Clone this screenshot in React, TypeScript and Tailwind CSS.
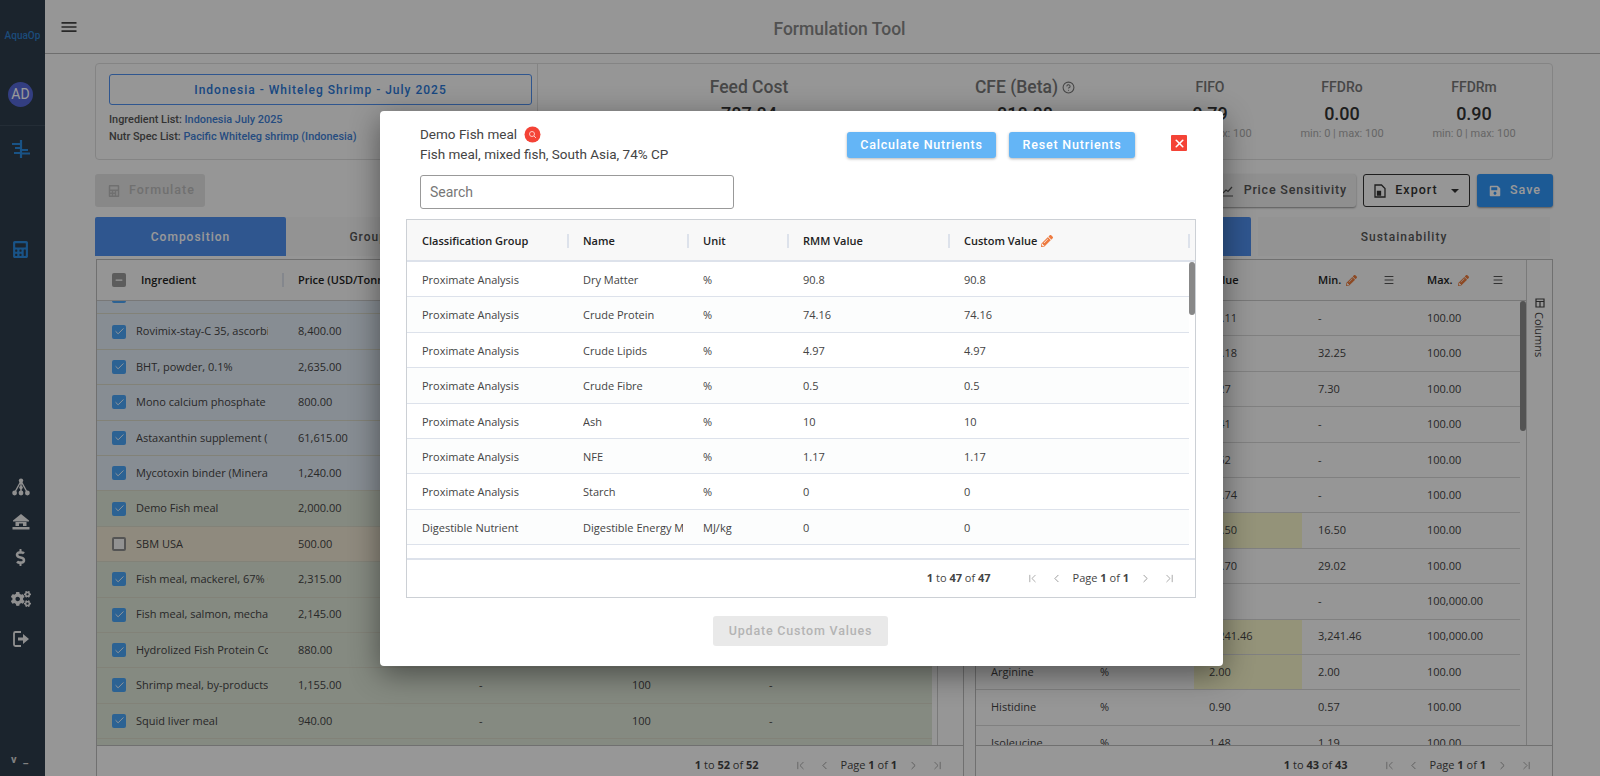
import React from 'react';
import { Check, ChevronFirst, ChevronLast, ChevronLeft, ChevronRight, CircleHelp, Menu as MenuLines, Minus, X } from 'lucide-react';
import { FaCalculator, FaCogs, FaDollarSign, FaPencilAlt, FaSave } from 'react-icons/fa';
import { MdMenu } from 'react-icons/md';

const ingredientRows = [
    { name: '', price: '', tone: 'blue', checked: true },
    { name: 'Rovimix-stay-C 35, ascorbic acid', price: '8,400.00', tone: 'blue', checked: true },
    { name: 'BHT, powder, 0.1%', price: '2,635.00', tone: 'blue', checked: true },
    { name: 'Mono calcium phosphate', price: '800.00', tone: 'blue', checked: true },
    { name: 'Astaxanthin supplement (10%)', price: '61,615.00', tone: 'blue', checked: true },
    { name: 'Mycotoxin binder (Mineral)', price: '1,240.00', tone: 'blue', checked: true },
    { name: 'Demo Fish meal', price: '2,000.00', tone: 'green', checked: true },
    { name: 'SBM USA', price: '500.00', tone: 'orange', checked: false },
    { name: 'Fish meal, mackerel, 67% CP', price: '2,315.00', tone: 'green', checked: true },
    { name: 'Fish meal, salmon, mechanical', price: '2,145.00', tone: 'green', checked: true },
    { name: 'Hydrolized Fish Protein Conc.', price: '880.00', tone: 'green', checked: true },
    { name: 'Shrimp meal, by-products', price: '1,155.00', tone: 'green', checked: true },
    { name: 'Squid liver meal', price: '940.00', tone: 'green', checked: true },
    { name: '', price: '', tone: 'green', checked: true },
];

const nutrientRows = [
    { name: 'Dry Matter', value: '10.11', min: '-', max: '100.00' },
    { name: 'Crude Protein', value: '32.18', min: '32.25', max: '100.00' },
    { name: 'Crude Lipids', value: '7.27', min: '7.30', max: '100.00' },
    { name: 'Crude Fibre', value: '2.41', min: '-', max: '100.00' },
    { name: 'Ash', value: '1.62', min: '-', max: '100.00' },
    { name: 'NFE', value: '12.74', min: '-', max: '100.00' },
    { name: 'Starch', value: '16.50', min: '16.50', max: '100.00', low: true },
    { name: 'Dig. Protein', value: '29.70', min: '29.02', max: '100.00' },
    { name: 'Dig. Lipid', value: '', min: '-', max: '100,000.00' },
    { name: 'Dig. Energy', value: '3,241.46', min: '3,241.46', max: '100,000.00', low: true },
    { name: 'Arginine', value: '2.00', min: '2.00', max: '100.00', low: true },
    { name: 'Histidine', value: '0.90', min: '0.57', max: '100.00' },
    { name: 'Isoleucine', value: '1.48', min: '1.19', max: '100.00' },
];

const customRows = [
    ['Proximate Analysis', 'Dry Matter', '%', '90.8', '90.8'],
    ['Proximate Analysis', 'Crude Protein', '%', '74.16', '74.16'],
    ['Proximate Analysis', 'Crude Lipids', '%', '4.97', '4.97'],
    ['Proximate Analysis', 'Crude Fibre', '%', '0.5', '0.5'],
    ['Proximate Analysis', 'Ash', '%', '10', '10'],
    ['Proximate Analysis', 'NFE', '%', '1.17', '1.17'],
    ['Proximate Analysis', 'Starch', '%', '0', '0'],
    ['Digestible Nutrient', 'Digestible Energy MJ', 'MJ/kg', '0', '0'],
];

const toneClass: Record<string, string> = {
    blue: 'bg-[#e2ebf5]',
    green: 'bg-[#dee6d8]',
    orange: 'bg-[#efe7d2]',
};

const Pager: React.FC<{ total: number }> = ({ total }) => (
    <div className="flex items-center text-[11px] text-[#444] font-['Open_Sans',sans-serif]">
        <span><b>1</b> to <b>{total}</b> of <b>{total}</b></span>
        <ChevronFirst size={13} strokeWidth={1.5} className="ml-[35px] text-[#999]" />
        <ChevronLeft size={13} strokeWidth={1.5} className="ml-[11px] text-[#888]" />
        <span className="ml-[10px]">Page <b>1</b> of <b>1</b></span>
        <ChevronRight size={13} strokeWidth={1.5} className="ml-[10px] text-[#888]" />
        <ChevronLast size={13} strokeWidth={1.5} className="ml-[11px] text-[#999]" />
    </div>
);

const Sep = () => <span className="w-[2px] h-[14px] bg-[#dde2eb] shrink-0" />;

const Checkbox: React.FC<{ checked: boolean }> = ({ checked }) =>
    checked ? (
        <span className="w-[14px] h-[14px] rounded-[2px] bg-[#4aa3f5] flex items-center justify-center shrink-0">
            <Check size={11} strokeWidth={2} className="text-white" />
        </span>
    ) : (
        <span className="w-[14px] h-[14px] rounded-[2px] border-2 border-[#8d8d8d] bg-[#f4f4f4] shrink-0" />
    );

const Metric: React.FC<{ label: string; value: string; big?: boolean; help?: boolean; className?: string }> = ({ label, value, big, help, className }) => (
    <div className={`flex flex-col items-center ${className}`}>
        <div className={`flex items-center gap-[4px] text-[#777] font-medium ${big ? 'text-[17.5px] leading-[21px]' : 'text-[14px] leading-[21px]'}`}>
            {label}
            {help && <CircleHelp size={13} strokeWidth={2} />}
        </div>
        <div className="text-[#333] font-medium text-[18px] leading-[27px] mt-[2px]">{value}</div>
        {!big && <div className="text-[11px] leading-[14px] text-[#aaa]">min: 0 | max: 100</div>}
    </div>
);

const Sidebar = () => (
    <aside className="w-[45px] shrink-0 bg-[#2e3c4c] flex flex-col items-center pr-[4px] relative">
        <div className="h-[82px] w-full flex flex-col items-center pt-[30px] pl-[4px] text-[#2f7fcb]">
            <span className="text-[10px] leading-[11px] font-medium">AquaOp</span>
        </div>
        <div className="w-[25px] h-[25px] rounded-full bg-[#5568d8] text-white text-[14px] flex items-center justify-center">AD</div>
        <div className="w-[45px] ml-[4px] border-b border-[#3d4b5b] mt-[18px]" />
        <svg width="20" height="20" viewBox="0 0 20 20" className="mt-[13px] text-[#2b8ae0]" fill="none" stroke="currentColor" strokeWidth="2.200">
            <path d="M10 1v18M1 5h9M4 9h6M10 11h7M10 14.500h9M3 14h7" />
        </svg>
        <FaCalculator size={17} className="mt-[82px] text-[#2b8ae0]" />
        <div className="flex-1" />
        <div className="flex flex-col items-center text-[#f0f0f0] mb-[128px]">
            <svg width="18" height="18" viewBox="0 0 18 18" fill="currentColor">
                <circle cx="9" cy="2.600" r="2.200" /><circle cx="9" cy="9.600" r="1.800" /><circle cx="2.600" cy="15" r="2.400" /><circle cx="9" cy="15" r="2.400" /><circle cx="15.400" cy="15" r="2.400" />
                <path d="M9 3L3 14M9 3l6 11M9 3v11" stroke="currentColor" strokeWidth="1.400" fill="none" />
            </svg>
            <svg width="18" height="18" viewBox="0 0 18 18" fill="currentColor" className="mt-[17px]">
                <path d="M9 1L1 7.500v1h16v-1zM3.500 9h11v4h-3.500v-2.500h-4V13H3.500zM0.500 14h17v2.500h-17z" />
            </svg>
            <FaDollarSign size={17} className="mt-[18px]" />
            <FaCogs size={20} className="mt-[23px]" />
            <svg width="18" height="18" viewBox="0 0 18 18" className="mt-[21px]">
                <path d="M9 2H3.500a1.500 1.500 0 0 0-1.500 1.500v11A1.500 1.500 0 0 0 3.500 16H9" fill="none" stroke="currentColor" strokeWidth="1.800" />
                <path d="M6 7.500h5V4l6 5-6 5v-3.500H6z" fill="currentColor" />
            </svg>
        </div>
        <div className="absolute left-[11px] top-[752px] text-[11px] text-[#d8d8d8] font-bold tracking-[2px]">v _</div>
    </aside>
);

const Composition = () => (
    <div className="w-[869px] flex flex-col">
        <div className="flex h-[39px] text-[12px] font-medium tracking-[1px]">
            <div className="w-[191px] bg-[#4f90ef] text-white rounded-t-[2px] flex items-center justify-center">Composition</div>
            <div className="w-[191px] bg-[#f5f5f5] text-[#555] flex items-center justify-center">Groupings</div>
        </div>
        <div className="ml-[1px] mt-[3px] flex-1 min-h-0 border border-[#bbb] flex flex-col font-['Open_Sans',sans-serif] text-[11px]">
            <div className="flex flex-1 min-h-0">
                <div className="w-[841px] flex flex-col border-r border-[#ccc]">
                    <div className="h-[41px] shrink-0 border-b border-[#c8c8c8] bg-[#f8f8f8] flex items-center font-semibold text-[#222]">
                        <span className="ml-[15px] w-[14px] h-[14px] rounded-[2px] bg-[#999] flex items-center justify-center shrink-0">
                            <Minus size={10} strokeWidth={3} className="text-white" />
                        </span>
                        <span className="ml-[15px] w-[141px]">Ingredient</span>
                        <Sep />
                        <span className="ml-[14px]">Price (USD/Tonne)</span>
                    </div>
                    <div className="flex-1 min-h-0 overflow-hidden">
                        <div className="-mt-[22px] w-[835px]">
                            {ingredientRows.map((r, i) => (
                                <div key={i} className={`h-[35.4px] flex items-center pl-[15px] border-b border-[#d9d9c8] text-[#444] ${toneClass[r.tone]}`}>
                                    <Checkbox checked={r.checked} />
                                    {r.name && (
                                        <>
                                            <span className="ml-[10px] w-[132px] overflow-hidden whitespace-nowrap">{r.name}</span>
                                            <span className="ml-[30px] w-[181px]">{r.price}</span>
                                            <span className="w-[153px]">-</span>
                                            <span className="w-[137px]">100</span>
                                            <span>-</span>
                                        </>
                                    )}
                                </div>
                            ))}
                        </div>
                    </div>
                </div>
            </div>
            <div className="h-[40px] shrink-0 border-t border-[#bbb] bg-[#fcfcfc] flex items-center justify-end pr-[19px]">
                <Pager total={52} />
            </div>
        </div>
    </div>
);

const Nutrients = () => (
    <div className="w-[578px] flex flex-col">
        <div className="flex h-[39px] text-[12px] font-medium tracking-[1px]">
            <div className="w-[276px] bg-[#4f90ef] text-white rounded-t-[2px] flex items-center justify-center">Nutrients</div>
            <div className="w-[292px] ml-[7px] bg-[#f5f5f5] text-[#555] flex items-center justify-center">Sustainability</div>
        </div>
        <div className="mt-[3px] flex-1 min-h-0 border border-[#bbb] flex flex-col font-['Open_Sans',sans-serif] text-[11px]">
            <div className="flex flex-1 min-h-0">
                <div className="w-[551px] flex flex-col border-r border-[#ccc] relative">
                    <div className="h-[41px] shrink-0 border-b border-[#c8c8c8] bg-[#f8f8f8] flex items-center font-semibold text-[#222]">
                        <span className="w-[109px] pl-[15px]">Nutrient</span>
                        <span className="w-[109px] pl-[15px]">Unit</span>
                        <span className="w-[108px] pl-[15px]">Value</span>
                        <span className="w-[109px] pl-[16px] flex items-center">
                            Min.<FaPencilAlt size={11} className="ml-[5px] text-[#ec7b3c]" />
                            <MenuLines size={12} className="ml-[26px] text-[#555]" />
                        </span>
                        <span className="w-[109px] pl-[16px] flex items-center">
                            Max.<FaPencilAlt size={11} className="ml-[5px] text-[#ec7b3c]" />
                            <MenuLines size={12} className="ml-[23px] text-[#555]" />
                        </span>
                    </div>
                    <div className="flex-1 min-h-0 overflow-hidden">
                        <div className="w-[544px]">
                            {nutrientRows.map(r => (
                                <div key={r.name} className="h-[35.4px] flex items-center border-b border-[#d5d5d5] text-[#444]">
                                    <span className="w-[109px] pl-[15px]">{r.name}</span>
                                    <span className="w-[109px] pl-[15px]">%</span>
                                    <span className={`w-[108px] h-full pl-[15px] flex items-center ${r.low ? 'bg-[#f7f5ca]' : ''}`}>{r.value}</span>
                                    <span className="w-[109px] pl-[16px]">{r.min}</span>
                                    <span className="pl-[16px]">{r.max}</span>
                                </div>
                            ))}
                        </div>
                    </div>
                    <div className="absolute left-[544px] top-[41px] w-[6px] h-[130px] rounded-[3px] bg-[#8a8a8a]" />
                </div>
                <div className="flex-1 flex flex-col items-center pt-[38px] text-[#444]">
                    <svg width="10" height="10" viewBox="0 0 10 10" fill="none" stroke="currentColor" strokeWidth="1.200">
                        <path d="M1 1h8v8H1zM1 3.500h8M5 3.500V9" />
                    </svg>
                    <span className="[writing-mode:vertical-rl] mt-[4px] leading-none">Columns</span>
                </div>
            </div>
            <div className="h-[40px] shrink-0 border-t border-[#bbb] bg-[#fcfcfc] flex items-center justify-end pr-[19px]">
                <Pager total={43} />
            </div>
        </div>
    </div>
);

const CustomValuesModal = () => (
    <div className="absolute left-[380px] top-[111px] w-[843px] h-[555px] bg-white rounded-[4px] shadow-[0_8px_30px_rgba(0,0,0,0.45)] flex flex-col">
        <div className="h-[64px] pl-[40px] pt-[13px] flex">
            <div className="w-[427px] text-[13.500px] leading-[20px] text-[#444]">
                <div className="flex items-center">
                    Demo Fish meal
                    <svg width="17" height="17" viewBox="0 0 17 17" className="ml-[7px]">
                        <circle cx="8.500" cy="8.500" r="8" fill="#f44336" />
                        <circle cx="8" cy="8" r="2.500" fill="none" stroke="#ffc9c4" strokeWidth="1" />
                        <path d="M10 10l2 2" stroke="#ffc9c4" strokeWidth="1" />
                    </svg>
                </div>
                <div>Fish meal, mixed fish, South Asia, 74% CP</div>
            </div>
            <button className="mt-[8px] w-[149px] h-[26px] rounded-[3px] bg-[#64b5f6] text-white text-[12.500px] font-medium tracking-[0.8px] shadow-[0_1px_3px_rgba(0,0,0,0.3)]">Calculate Nutrients</button>
            <button className="mt-[8px] ml-[13px] w-[126px] h-[26px] rounded-[3px] bg-[#64b5f6] text-white text-[12.500px] font-medium tracking-[0.8px] shadow-[0_1px_3px_rgba(0,0,0,0.3)]">Reset Nutrients</button>
            <span className="mt-[11px] ml-[36px] w-[16px] h-[16px] rounded-[1px] bg-[#f44336] flex items-center justify-center">
                <X size={13} strokeWidth={3} className="text-white" />
            </span>
        </div>
        <div className="ml-[40px] w-[314px] h-[34px] rounded-[3px] border border-[#999] flex items-center pl-[9px] text-[14px] text-[#777]">Search</div>
        <div className="ml-[26px] mt-[10px] w-[790px] h-[379px] border border-[#ccd0d5] flex flex-col font-['Open_Sans',sans-serif] text-[11px] text-[#444]">
            <div className="h-[42px] shrink-0 bg-[#f8f8f8] border-b-2 border-[#dde2eb] flex items-center pl-[15px] pt-[2px] font-semibold text-[#222]">
                <span className="w-[161px] pr-[14px] flex items-center justify-between">Classification Group<Sep /></span>
                <span className="w-[120px] pr-[14px] flex items-center justify-between">Name<Sep /></span>
                <span className="w-[100px] pr-[14px] flex items-center justify-between">Unit<Sep /></span>
                <span className="w-[161px] pr-[14px] flex items-center justify-between">RMM Value<Sep /></span>
                <span className="w-[226px] flex items-center">Custom Value<FaPencilAlt size={12} className="ml-[4px] text-[#ee7a3f]" /><span className="flex-1" /><Sep /></span>
            </div>
            <div className="h-[296px] shrink-0 overflow-hidden relative">
                <div className="w-[782px]">
                    {customRows.map((r, i) => (
                        <div key={i} className={`h-[35.4px] border-b border-[#dde2eb] flex items-center pl-[15px] pt-[2px] ${i % 2 ? 'bg-[#fcfdfd]' : 'bg-white'}`}>
                            <span className="w-[161px]">{r[0]}</span>
                            <span className="w-[100px] mr-[20px] overflow-hidden whitespace-nowrap">{r[1]}</span>
                            <span className="w-[100px]">{r[2]}</span>
                            <span className="w-[161px]">{r[3]}</span>
                            <span>{r[4]}</span>
                        </div>
                    ))}
                </div>
                <div className="absolute right-[0px] top-[0px] w-[6px] h-[53px] rounded-[3px] bg-[#888]" />
            </div>
            <div className="flex-1 border-t-2 border-[#dde2eb] flex items-center justify-end pr-[19px]">
                <Pager total={47} />
            </div>
        </div>
        <button className="ml-[333px] mt-[18px] w-[175px] h-[30px] rounded-[3px] bg-[#e9e9e9] text-[#b4b4b4] text-[12.500px] font-medium tracking-[0.8px]">Update Custom Values</button>
    </div>
);

export default function App() {
    return (
        <div className="relative w-[1600px] h-[776px] overflow-hidden flex bg-[#fafafa] font-['Roboto',sans-serif]">
            <Sidebar />
            <main className="flex-1 min-w-0 flex flex-col">
                <header className="h-[54px] shrink-0 bg-[#fafafa] border-b border-[#b8b8b8] flex items-center pl-[14px] text-[#444]">
                    <MdMenu size={20} />
                    <h1 className="flex-1 text-center pt-[5px] text-[17.500px] font-medium text-[#888]">Formulation Tool</h1>
                </header>
                <div className="flex-1 min-h-0 pl-[50px] pr-[47px] pt-[9px] flex flex-col">
                    <section className="h-[97px] shrink-0 border border-[#ddd] rounded-[4px] flex">
                        <div className="w-[442px] border-r border-[#ddd] pl-[13px] pr-[5px] pt-[10px] text-[10.900px] font-medium text-[#555]">
                            <div className="h-[31px] border border-[#4f90ef] rounded-[3px] text-[#2b78d8] text-[12px] tracking-[1px] flex items-center justify-center">Indonesia - Whiteleg Shrimp - July 2025</div>
                            <div className="mt-[6px] leading-[17px]">Ingredient List: <span className="text-[#3f7fd6]">Indonesia July 2025</span></div>
                            <div className="leading-[17px]">Nutr Spec List: <span className="text-[#3f7fd6]">Pacific Whiteleg shrimp (Indonesia)</span></div>
                        </div>
                        <div className="flex-1 flex pt-[13px]">
                            <Metric big label="Feed Cost" value="787.84" className="ml-[30px] w-[362px]" />
                            <Metric big help label="CFE (Beta)" value="818.88" className="w-[190px] mr-[24px]" />
                            <Metric label="FIFO" value="0.79" className="w-[132px]" />
                            <Metric label="FFDRo" value="0.00" className="w-[132px]" />
                            <Metric label="FFDRm" value="0.90" className="w-[132px]" />
                        </div>
                    </section>
                    <div className="h-[33px] shrink-0 mt-[14px] flex text-[12.500px] font-medium tracking-[1px]">
                        <button className="w-[110px] rounded-[3px] bg-[#e3e3e3] text-[#bbb] flex items-center pl-[13px] gap-[9px]">
                            <FaCalculator size={12} />Formulate
                        </button>
                        <div className="flex-1" />
                        <button className="w-[148px] rounded-[3px] bg-[#eee] text-[#555] flex items-center justify-end pr-[9px] gap-[10px] tracking-[0.8px] shadow-[0_1px_2px_rgba(0,0,0,0.4)]">
                            <svg width="12" height="12" viewBox="0 0 12 12" fill="none" stroke="currentColor" strokeWidth="1.200"><path d="M1 11h10M1 8l3-3 2 1.500L10 2" /></svg>
                            Price Sensitivity
                        </button>
                        <button className="ml-[7px] w-[107px] rounded-[3px] border border-[#333] text-[#333] flex items-center justify-center gap-[9px]">
                            <svg width="12" height="14" viewBox="0 0 12 14" fill="none" stroke="currentColor" strokeWidth="1.300"><path d="M1 1h6.500L11 4.500V13H1z" /><path d="M3.500 7.500h3v3.500h-3z" fill="currentColor" /></svg>
                            Export
                            <span className="ml-[4px] border-x-[4px] border-t-[4px] border-x-transparent border-t-[#333]" />
                        </button>
                        <button className="ml-[7px] w-[76px] rounded-[3px] bg-[#3096f8] text-white flex items-center justify-center gap-[9px] shadow-[0_1px_2px_rgba(0,0,0,0.4)]">
                            <FaSave size={12} />Save
                        </button>
                    </div>
                    <div className="flex-1 min-h-0 mt-[10px] flex gap-[11px] -mb-[10px]">
                        <Composition />
                        <Nutrients />
                    </div>
                </div>
            </main>
            <div className="absolute inset-0 bg-black/40" />
            <CustomValuesModal />
        </div>
    );
}
